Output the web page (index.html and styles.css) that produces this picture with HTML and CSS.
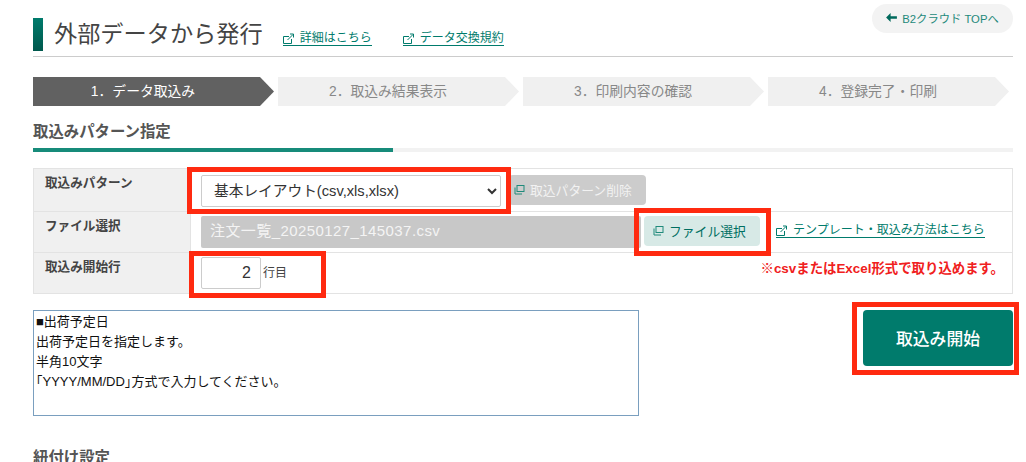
FILE: index.html
```html
<!DOCTYPE html>
<html lang="ja">
<head>
<meta charset="utf-8">
<title>外部データから発行</title>
<link rel="stylesheet" href="styles.css">
</head>
<body>
<svg class="defs" width="0" height="0" aria-hidden="true">
  <symbol id="ext" viewBox="0 0 12 12"><path d="M8.500 6v4.500h-8v-7h5.500" fill="none" stroke="currentColor" stroke-width="1"/><path d="M4.500 7 10 1.500M7 1h3.500v3.500" fill="none" stroke="currentColor" stroke-width="1"/></symbol>
  <symbol id="win" viewBox="0 0 11 11"><rect x="3" y="1.500" width="7" height="6" fill="none" stroke="currentColor" stroke-width="1"/><path d="M1 3.500v6.500h7" fill="none" stroke="currentColor" stroke-width="1"/></symbol>
</svg>
<main class="page">
  <a class="top-btn" href="#"><svg class="arrow" viewBox="0 0 12 10" width="11" height="9"><path d="M5 0 0 5l5 5V6.500h7v-3H5z" fill="currentColor"/></svg>B2クラウド TOPへ</a>
  <header class="head">
    <span class="head-bar"></span>
    <h1 class="title">外部データから発行</h1>
    <a class="link head-link" href="#"><svg class="ext"><use href="#ext"/></svg>詳細はこちら</a>
    <a class="link head-link second" href="#"><svg class="ext"><use href="#ext"/></svg>データ交換規約</a>
  </header>

  <ol class="steps">
    <li class="step active">1．データ取込み</li>
    <li class="step">2．取込み結果表示</li>
    <li class="step">3．印刷内容の確認</li>
    <li class="step">4．登録完了・印刷</li>
  </ol>

  <h2 class="section">取込みパターン指定</h2>
  <div class="rule"><span class="rule-fill"></span></div>

  <section class="form-wrap">
    <table class="form">
      <tr class="r1">
        <th>取込みパターン</th>
        <td>
          <div class="cell">
            <select class="select"><option>基本レイアウト(csv,xls,xlsx)</option></select>
            <button class="btn del"><svg class="win"><use href="#win"/></svg>取込パターン削除</button>
          </div>
        </td>
      </tr>
      <tr class="r2">
        <th>ファイル選択</th>
        <td>
          <div class="cell">
            <div class="file">注文一覧_20250127_145037.csv</div>
            <button class="btn pick"><svg class="win"><use href="#win"/></svg>ファイル選択</button>
            <a class="link tpl" href="#"><svg class="ext"><use href="#ext"/></svg>テンプレート・取込み方法はこちら</a>
          </div>
        </td>
      </tr>
      <tr class="r3">
        <th>取込み開始行</th>
        <td>
          <div class="cell">
            <input class="num" type="text" value="2">
            <span class="unit">行目</span>
            <span class="note">※csvまたはExcel形式で取り込めます。</span>
          </div>
        </td>
      </tr>
    </table>
    <span class="mark mark-select"></span>
    <span class="mark mark-file"></span>
    <span class="mark mark-start"></span>
  </section>

  <section class="lower">
    <div class="help">■出荷予定日
出荷予定日を指定します。
半角10文字
<span class="halt">「</span>YYYY/MM/DD<span class="halt">」</span>方式で入力してください。</div>
    <div class="start-wrap">
      <button class="start">取込み開始</button>
      <span class="mark mark-go"></span>
    </div>
  </section>

  <h2 class="section tie">紐付け設定</h2>
</main>
</body>
</html>
```

FILE: styles.css
```css
* { box-sizing: border-box; }
html, body { margin: 0; height: 462px; overflow: hidden; background: #fff; }
body { font-family: "Liberation Sans", "Noto Sans CJK JP", sans-serif; color: #333; }
.defs { position: absolute; }
.page { position: relative; padding: 0 13px 0 33px; }

.top-btn {
  position: absolute; top: 4px; right: 13px;
  width: 141px; height: 29px; padding-bottom: 2px; border-radius: 15px; background: #f3f3f3;
  display: flex; align-items: center; justify-content: center; gap: 5px;
  font-size: 11.300px; color: #1f8a7b; text-decoration: none;
}
.arrow { color: #00695c; }

.head { display: flex; align-items: center; height: 57px; padding-top: 18px; padding-bottom: 5px; border-bottom: 1px solid #ccc; }
.head-bar { width: 10px; height: 33px; background: linear-gradient(#007b6c, #00584d); }
.title { margin: 0 0 0 11px; font-size: 23.200px; font-weight: 400; color: #444; line-height: 33px; }
.link { color: #007b6c; font-size: 12px; line-height: 14px; text-decoration: none; border-bottom: 1px solid #007b6c; display: inline-flex; align-items: flex-end; white-space: nowrap; }
.ext { width: 12px; height: 12px; margin-right: 5px; }
.head-link { margin-left: 20px; margin-top: 7px; }
.head-link.second { margin-left: 31px; }

.steps { list-style: none; margin: 20px 0 0; padding: 0; display: flex; gap: 4px; }
.step {
  width: 241px; height: 29px; line-height: 29px; padding-right: 21px; text-align: center; font-size: 13.800px;
  background: #f0f0f0; color: #888;
  clip-path: polygon(0 0, 227px 0, 100% 50%, 227px 100%, 0 100%);
}
.step.active { background: #616161; color: #fff; }

.section { margin: 17px 0 0; font-size: 15.400px; line-height: 18px; font-weight: 700; color: #555; }
.rule { margin-top: 7px; height: 4px; background: #f2f2f2; }
.rule-fill { display: block; width: 360px; height: 4px; background: #178b7a; }

.form-wrap { position: relative; margin-top: 16px; }
.form { width: 980px; border-collapse: collapse; table-layout: fixed; }
.form th, .form td { border: 1px solid #e3e3e3; padding: 0; vertical-align: top; }
.form th { width: 157px; background: #f0f0f0; text-align: left; font-size: 12.600px; font-weight: 700; color: #444; padding: 7px 11px 0; line-height: 15px; }
.r1 { height: 43px; } .r2 { height: 41px; } .r3 { height: 41px; }
.cell { display: flex; align-items: flex-start; padding: 6px 0 0 10px; height: 100%; }
.r2 .cell { padding-top: 4px; }
.r3 .cell { padding-top: 4px; }

.select {
  width: 300px; height: 32px; padding: 0 8px; border: 1px solid #ccc; border-radius: 2px;
  background: #fff; font: 14.700px "Liberation Sans", "Noto Sans CJK JP", sans-serif; color: #333;
}
.btn { display: flex; align-items: center; border: 0; border-radius: 4px; height: 30px; padding-bottom: 2px; font: 12.800px "Liberation Sans", "Noto Sans CJK JP", sans-serif; }
.win { width: 11px; height: 11px; margin-right: 5px; }
.del { width: 137px; margin-left: 8px; padding-left: 5px; background: #ccc; color: #f2f2f2; }
.del .win { color: #1f8a7b; }
.file { width: 440px; height: 32px; line-height: 30px; padding-left: 9px; background: #c8c8c8; color: #f4f4f4; font-size: 15px; letter-spacing: 0.420px; border-radius: 2px; }
.pick { width: 116px; margin-left: 3px; padding-left: 9px; background: #d7e9e6; color: #006f62; }
.pick .win { color: #1f8a7b; }
.tpl { margin: 7px 0 0 16px; }
.num { width: 60px; height: 32px; border: 1px solid #ccc; border-radius: 2px; text-align: right; padding: 0 9px; font: 16px "Liberation Sans", sans-serif; color: #333; }
.unit { margin: 6px 0 0 2px; font-size: 12px; color: #444; }
.note { margin: 0 0 0 auto; padding-right: 8px; font-size: 13.400px; font-weight: 700; color: #f02020; }

.mark { position: absolute; border: 5px solid #ff2a10; pointer-events: none; }
.mark-select { left: 154px; top: -1px; width: 324px; height: 47px; }
.mark-file { left: 601px; top: 40px; width: 137px; height: 48px; }
.mark-start { left: 156px; top: 83px; width: 137px; height: 47px; }

.lower { display: flex; justify-content: space-between; margin-top: 16px; }
.help {
  width: 606px; height: 106px; padding: 1px 2px; white-space: pre-line;
  border: 1px solid #7a9fbf; background: #fff; overflow: hidden;
  font-size: 13px; line-height: 20px; color: #111;
}
.halt { font-feature-settings: "halt"; }
.start-wrap { position: relative; }
.start { display: block; width: 150px; height: 56px; border: 0; border-radius: 4px; background: #007b6c; color: #fff; font: 500 16.800px "Liberation Sans", "Noto Sans CJK JP", sans-serif; }
.mark-go { left: -11px; top: -8px; width: 167px; height: 73px; }
.tie { margin-top: 33px; }
```
